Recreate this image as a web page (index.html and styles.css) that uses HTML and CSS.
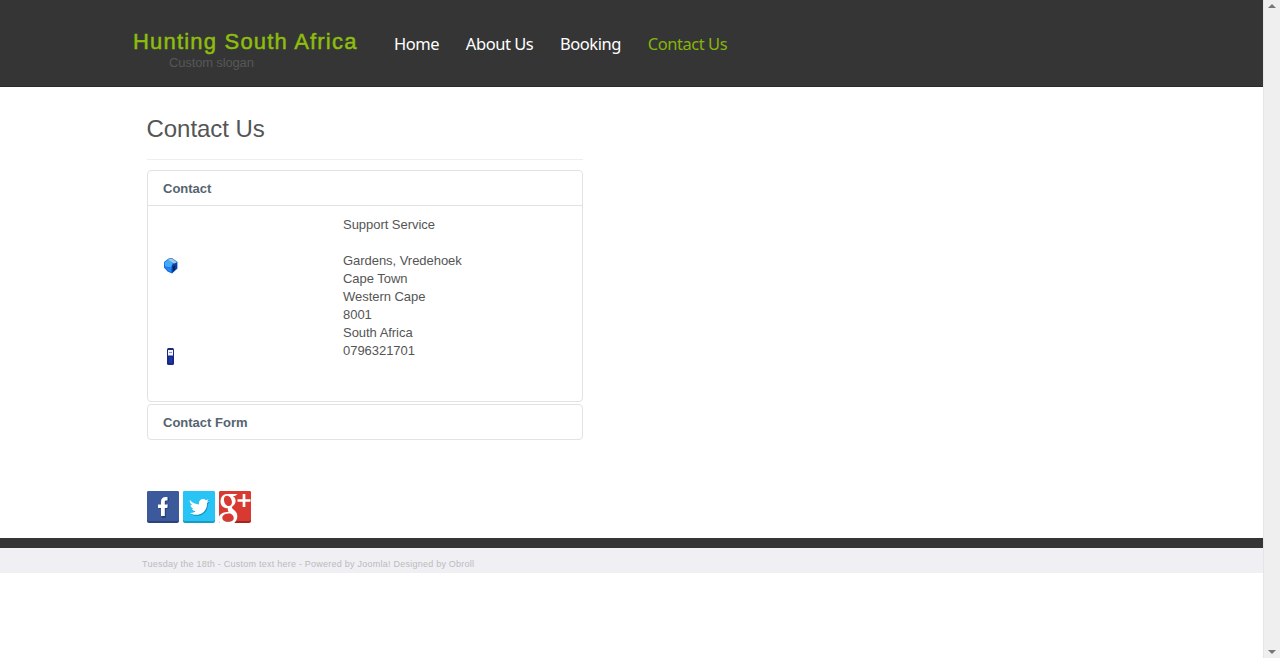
FILE: index.html
```html
<!DOCTYPE html>
<html lang="en">
<head>
<meta charset="utf-8">
<title>Contact Us</title>
<link rel="stylesheet" href="styles.css">
</head>
<body>
<div class="page">
  <header class="header">
    <div class="brand">
      <a class="site-name">Hunting South Africa</a>
      <span class="slogan">Custom slogan</span>
    </div>
    <nav class="nav">
      <a>Home</a>
      <a>About Us</a>
      <a>Booking</a>
      <a class="active">Contact Us</a>
    </nav>
  </header>
  <main class="content">
    <h1>Contact Us</h1>
    <section class="panel panel-open">
      <h2>Contact</h2>
      <div class="details">
        <div class="markers">
          <svg class="house" width="16" height="17" viewBox="0 0 16 17">
            <path d="M1 5 5.500 1.500 9 1l5.500 4v6.500L9 16.500 4.500 14.500 1 10.500z" fill="#1269d8"/>
            <path d="M1.500 5.500 6 2l4 3.500-2 5-6-1z" fill="#45a9fa"/>
            <path d="M5 2.500 9 1.500l5 4-3 1z" fill="#a5c8de"/>
            <path d="M9 8l5-2.500v6L9 16z" fill="#0643a0"/>
            <path d="M10 9.500l2-1v4l-2 1.500z" fill="#061f54"/>
            <path d="M2 10l6 1v4L4.500 13.500z" fill="#2487ee"/>
          </svg>
          <svg class="phone" width="7" height="17" viewBox="0 0 7 17">
            <rect width="7" height="17" rx="1.500" fill="#18298c"/>
            <rect x="1" y="2" width="5" height="5.500" fill="#f1f5ff"/>
            <path d="M2 4.500h3" stroke="#8292c5"/>
            <path d="M2 10h3M2 12h3M2 14h3" stroke="#3850b0" stroke-width=".7"/>
            <path d="M1 1h5" stroke="#222d50"/>
          </svg>
        </div>
        <address>
          <p>Support Service</p>
          <p>Gardens, Vredehoek<br>Cape Town<br>Western Cape<br>8001<br>South Africa<br>0796321701</p>
        </address>
      </div>
    </section>
    <section class="panel"><h2>Contact Form</h2></section>
    <div class="social">
      <svg width="32" height="32" viewBox="0 0 32 32">
        <rect width="32" height="32" rx="2" fill="#2b427a"/><rect width="32" height="30" rx="2" fill="#3c599b"/>
        <path d="M14 26V17h-3v-4h3v-3c0-3 2-4.500 4.500-4.500H21v4h-1.500c-1.200 0-1.500.5-1.500 1.500v2h3l-.5 4H18v9z" fill="#263e76" transform="translate(.8 .8)"/>
        <path d="M14 25V17h-3v-3.500h3v-3c0-3 2-4.500 4.500-4.500H20.500v3.500h-1.200c-1.200 0-1.500.5-1.500 1.500v2.500h3l-.5 3.500h-2.500v8z" fill="#fff"/>
      </svg>
      <svg width="32" height="32" viewBox="0 0 32 32">
        <rect width="32" height="32" rx="2" fill="#169cc5"/><rect width="32" height="30" rx="2" fill="#28c4f5"/>
        <path d="M7 9c2.500 3 5.500 4.200 9 4.500-.6-3.500 1.500-5.500 4-5.500 1.200 0 2.200.5 3 1.200l2.500-1-1.500 2.300 2-.4-2 2.200c.2 6.500-4.500 11.500-10.500 11.500-2.500 0-4.700-.7-6.500-1.900 2.200.2 4-.3 5.500-1.600-1.800-.1-3-1.100-3.500-2.600h1.600c-1.900-.6-3-2-3-4l1.700.5C7.600 12.800 6 11 7 9z" fill="#1290bd" transform="translate(.8 1)"/>
        <path d="M7 9c2.500 3 5.500 4.200 9 4.500-.6-3.500 1.500-5.500 4-5.500 1.200 0 2.200.5 3 1.200l2.500-1-1.500 2.300 2-.4-2 2.200c.2 6.500-4.500 11.500-10.500 11.500-2.500 0-4.700-.7-6.500-1.900 2.200.2 4-.3 5.500-1.600-1.800-.1-3-1.100-3.500-2.600h1.600c-1.900-.6-3-2-3-4l1.700.5C7.600 12.800 6 11 7 9z" fill="#fff"/>
      </svg>
      <svg width="32" height="32" viewBox="0 0 32 32">
        <rect width="32" height="32" rx="2" fill="#a1261f"/><rect width="32" height="30" rx="2" fill="#d83a31"/>
        <path fill-rule="evenodd" fill="#fff" d="M8 3h10.500l-2.500 2h-2.200c2 1.300 2.800 3 2.800 5 0 2.300-1.200 3.800-2.700 5-1.500 1.200-1.300 2 .2 3.200 2.700 2 4.200 3.600 4.200 6.800 0 2.700-1 5-3 7H1c-.7-.6-1-1.400-1-2.300v-4c1.500-3.300 5-4.700 9.700-4.900-.8-1-1.200-2.100-.7-3.500C4.500 17.300 1.500 14.500 1.500 10.500 1.500 6 4.200 3 8 3zM8 4.700c-2.300 0-3.400 2-3 4.800.4 3 2.300 5.500 4.700 5.500s3.500-2.200 3.100-4.900C12.300 7 10.300 4.700 8 4.700zM10.500 22.500c-4 0-7.200 1.500-7.200 4.300 0 2.700 2.500 4 6 4 3.700 0 5.500-1.500 5.500-3.800 0-2-1.300-3-3.300-4.500z"/>
        <path d="M25 3v13M18.500 9.500h13" stroke="#fff" stroke-width="2.700"/>
      </svg>
    </div>
  </main>
  <footer class="footer">Tuesday the 18th - Custom text here - Powered by Joomla! Designed by Obroll</footer>
</div>
<aside class="scrollbar">
  <svg width="8" height="5" viewBox="0 0 8 5"><path d="M4 0l4 4H0z" fill="#777"/></svg>
  <svg width="8" height="5" viewBox="0 0 8 5"><path d="M0 0h8L4 4z" fill="#777"/></svg>
</aside>
</body>
</html>
```
FILE: styles.css
```css
* { box-sizing: border-box; }
body { margin: 0; display: flex; height: 658px; overflow: hidden; background: #fff; color: #555; font: 13px/18px "Liberation Sans", Arial, sans-serif; }
.page { width: 1263px; }
.header { display: flex; height: 87px; padding-left: 133px; background: #353535; border-bottom: 1px solid #292929; }
.brand { width: 261px; padding-top: 28px; }
.site-name { display: block; font-size: 22px; line-height: 27px; letter-spacing: 1.2px; white-space: nowrap; color: #8dbd0d; -webkit-text-stroke: .5px #8dbd0d; }
.slogan { display: block; margin-left: 36px; line-height: 16px; letter-spacing: -.15px; color: #575757; }
.nav { display: flex; gap: 26.7px; padding-top: 32px; font: 16.5px/24px "Noto Sans", sans-serif; letter-spacing: -.45px; color: #fff; white-space: nowrap; }
.nav .active { color: #86b40b; }
.content { width: 583px; height: 451px; padding: 27px 0 0 147px; }
h1 { height: 46px; margin: 0 0 10px; border-bottom: 1px solid #eee; font-size: 24px; font-weight: 400; line-height: 30px; letter-spacing: -.05px; text-indent: -.5px; color: #555; }
.panel { height: 36px; margin-bottom: 2px; border: 1px solid #e2e2e2; border-radius: 4px; }
.panel-open { height: 232px; }
h2 { margin: 0; padding: 9px 15px 7px; height: 34px; font-size: 13px; line-height: 18px; color: #55646f; }
.panel-open h2 { height: 35px; border-bottom: 1px solid #e2e2e2; }
.details { display: flex; padding: 10px 15px; }
.markers { display: flex; flex-direction: column; width: 180px; padding-top: 41px; }
.phone { margin: 74px 0 0 4px; }
address { font-style: normal; letter-spacing: -.04px; }
p { margin: 0 0 18px; }
.social { display: flex; gap: 4px; margin-top: 51px; }
.footer { height: 35px; padding: 10px 0 0 142px; border-top: 10px solid #353535; background: #f0eff4; font-size: 9px; line-height: 12px; letter-spacing: .24px; color: #bbb; }
.scrollbar { display: flex; flex-direction: column; justify-content: space-between; align-items: center; width: 17px; padding: 4px 0 3px; background: #efefef; border-left: 1px solid #e5e5e5; }
```
